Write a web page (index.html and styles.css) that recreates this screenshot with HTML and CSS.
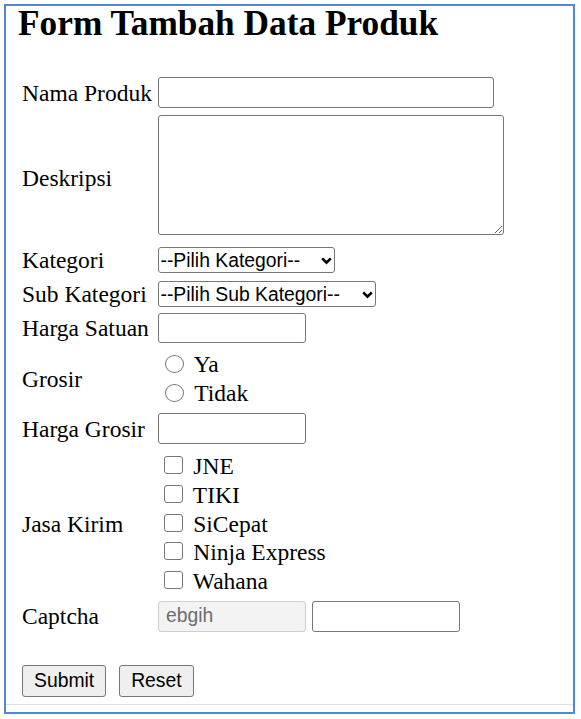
FILE: index.html
```html
<!DOCTYPE html>
<html lang="id">
<head>
<meta charset="utf-8">
<title>Form Tambah Data Produk</title>
<link rel="stylesheet" href="styles.css">
</head>
<body>
<div class="frame">
  <div class="page">
    <h2 class="title">Form Tambah Data Produk</h2>
    <form class="form">
      <div class="row">
        <label class="lbl" for="nama">Nama Produk</label>
        <div class="field"><input id="nama" class="text w-nama" type="text"></div>
      </div>
      <div class="row r-desk">
        <label class="lbl" for="desk">Deskripsi</label>
        <div class="field field-ta"><textarea id="desk" class="text ta"></textarea></div>
      </div>
      <div class="row r-kat">
        <label class="lbl" for="kat">Kategori</label>
        <div class="field">
          <span class="sel w-kat">
            <select id="kat"><option>--Pilih Kategori--</option></select>
            <svg class="chev" viewBox="0 0 11 8" width="11" height="8"><polyline points="1.2,1.4 5.5,5.7 9.8,1.4" fill="none" stroke="#000" stroke-width="2.6"/></svg>
          </span>
        </div>
      </div>
      <div class="row r-sub">
        <label class="lbl" for="sub">Sub Kategori</label>
        <div class="field">
          <span class="sel w-sub">
            <select id="sub"><option>--Pilih Sub Kategori--</option></select>
            <svg class="chev" viewBox="0 0 11 8" width="11" height="8"><polyline points="1.2,1.4 5.5,5.7 9.8,1.4" fill="none" stroke="#000" stroke-width="2.6"/></svg>
          </span>
        </div>
      </div>
      <div class="row r-satuan">
        <label class="lbl" for="satuan">Harga Satuan</label>
        <div class="field"><input id="satuan" class="text w-sm h-30" type="text"></div>
      </div>
      <div class="row r-grosir">
        <span class="lbl">Grosir</span>
        <div class="opts opts-radio">
          <label class="opt"><input class="rd" type="radio" name="grosir"> Ya</label>
          <label class="opt"><input class="rd" type="radio" name="grosir"> Tidak</label>
        </div>
      </div>
      <div class="row r-hgrosir">
        <label class="lbl" for="hgrosir">Harga Grosir</label>
        <div class="field"><input id="hgrosir" class="text w-sm" type="text"></div>
      </div>
      <div class="row r-jasa">
        <span class="lbl">Jasa Kirim</span>
        <div class="opts">
          <label class="opt"><input class="cb" type="checkbox"> JNE</label>
          <label class="opt"><input class="cb" type="checkbox"> TIKI</label>
          <label class="opt"><input class="cb" type="checkbox"> SiCepat</label>
          <label class="opt"><input class="cb" type="checkbox"> Ninja Express</label>
          <label class="opt"><input class="cb" type="checkbox"> Wahana</label>
        </div>
      </div>
      <div class="row r-captcha">
        <label class="lbl" for="captcha">Captcha</label>
        <div class="field field-pair">
          <input class="text w-sm dis" type="text" value="ebgih" disabled>
          <input id="captcha" class="text w-sm" type="text">
        </div>
      </div>
      <div class="actions">
        <button class="btn" type="submit">Submit</button>
        <button class="btn" type="reset">Reset</button>
      </div>
    </form>
  </div>
</div>
</body>
</html>
```
FILE: styles.css
```css
* { box-sizing: border-box; }

html, body {
  margin: 0;
  background: #fff;
}

body {
  padding: 4px;
  font-family: "Liberation Serif", "Times New Roman", serif;
  color: #000;
}

.frame {
  width: 571px;
  height: 710px;
  border: 2px solid #5288d8;
  overflow: hidden;
}

.page {
  height: 699px;
  border-bottom: 1.5px solid #e0e0e0;
  padding: 1px 0 0 12px;
}

.title {
  margin: 0;
  font-size: 35.3px;
  font-weight: bold;
  line-height: 34px;
}

.form {
  margin-top: 36px;
  padding-left: 4px;
  font-size: 23.5px;
}

.row {
  display: flex;
  align-items: center;
}

.lbl {
  width: 136px;
  flex: none;
  line-height: 26px;
}

.field {
  display: flex;
  align-items: center;
}

.field-ta { padding-bottom: 5px; }
.field-pair { gap: 6px; }

.r-desk { margin-top: 7px; }
.r-kat { margin-top: 7px; }
.r-sub { margin-top: 8px; }
.r-satuan { margin-top: 6px; }
.r-grosir { margin-top: 7px; }
.r-hgrosir { margin-top: 5px; }
.r-jasa { margin-top: 8px; }
.r-captcha { margin-top: 5px; }

.text {
  display: block;
  height: 31px;
  margin: 0;
  padding: 0 3px;
  font-family: "Liberation Sans", Arial, sans-serif;
  font-size: 19.33px;
  color: #000;
  background: #fff;
  border: 1.5px solid #767676;
  border-radius: 3px;
}

.w-nama { width: 336px; }
.w-sm { width: 148px; }
.h-30 { height: 30px; }

.ta {
  width: 346px;
  height: 120px;
  resize: both;
}

.dis {
  background: #f3f3f3;
  border-color: #cfcfcf;
  color: #6d6d6d;
  padding-left: 7px;
}

.sel {
  position: relative;
  display: block;
}

.sel select {
  -webkit-appearance: none;
  appearance: none;
  display: block;
  width: 100%;
  height: 26px;
  margin: 0;
  padding: 0 0 0 1.5px;
  font-family: "Liberation Sans", Arial, sans-serif;
  font-size: 19.33px;
  color: #000;
  background: #fff;
  border: 1.5px solid #767676;
  border-radius: 3px;
}

.w-kat { width: 177px; }
.w-sub { width: 218px; }

.chev {
  position: absolute;
  right: 3px;
  top: 9.5px;
  pointer-events: none;
}

.opts { display: block; }

.opt {
  display: block;
  line-height: 28.75px;
  white-space: nowrap;
}

.opts-radio .opt { line-height: 29px; }

.cb,
.rd {
  -webkit-appearance: none;
  appearance: none;
  width: 19px;
  height: 18px;
  margin: 0 4.4px 0 6px;
  border: 1.5px solid #767676;
  border-radius: 3px;
  background: #fff;
  vertical-align: baseline;
}

.rd {
  margin-left: 7.3px;
  border-radius: 50%;
  vertical-align: -1px;
}

.actions {
  display: flex;
  gap: 13px;
  margin-top: 33px;
}

.btn {
  height: 32px;
  margin: 0;
  padding: 0 11px;
  font-family: "Liberation Sans", Arial, sans-serif;
  font-size: 19.33px;
  color: #000;
  background: #efefef;
  border: 1.5px solid #767676;
  border-radius: 3px;
}
```
